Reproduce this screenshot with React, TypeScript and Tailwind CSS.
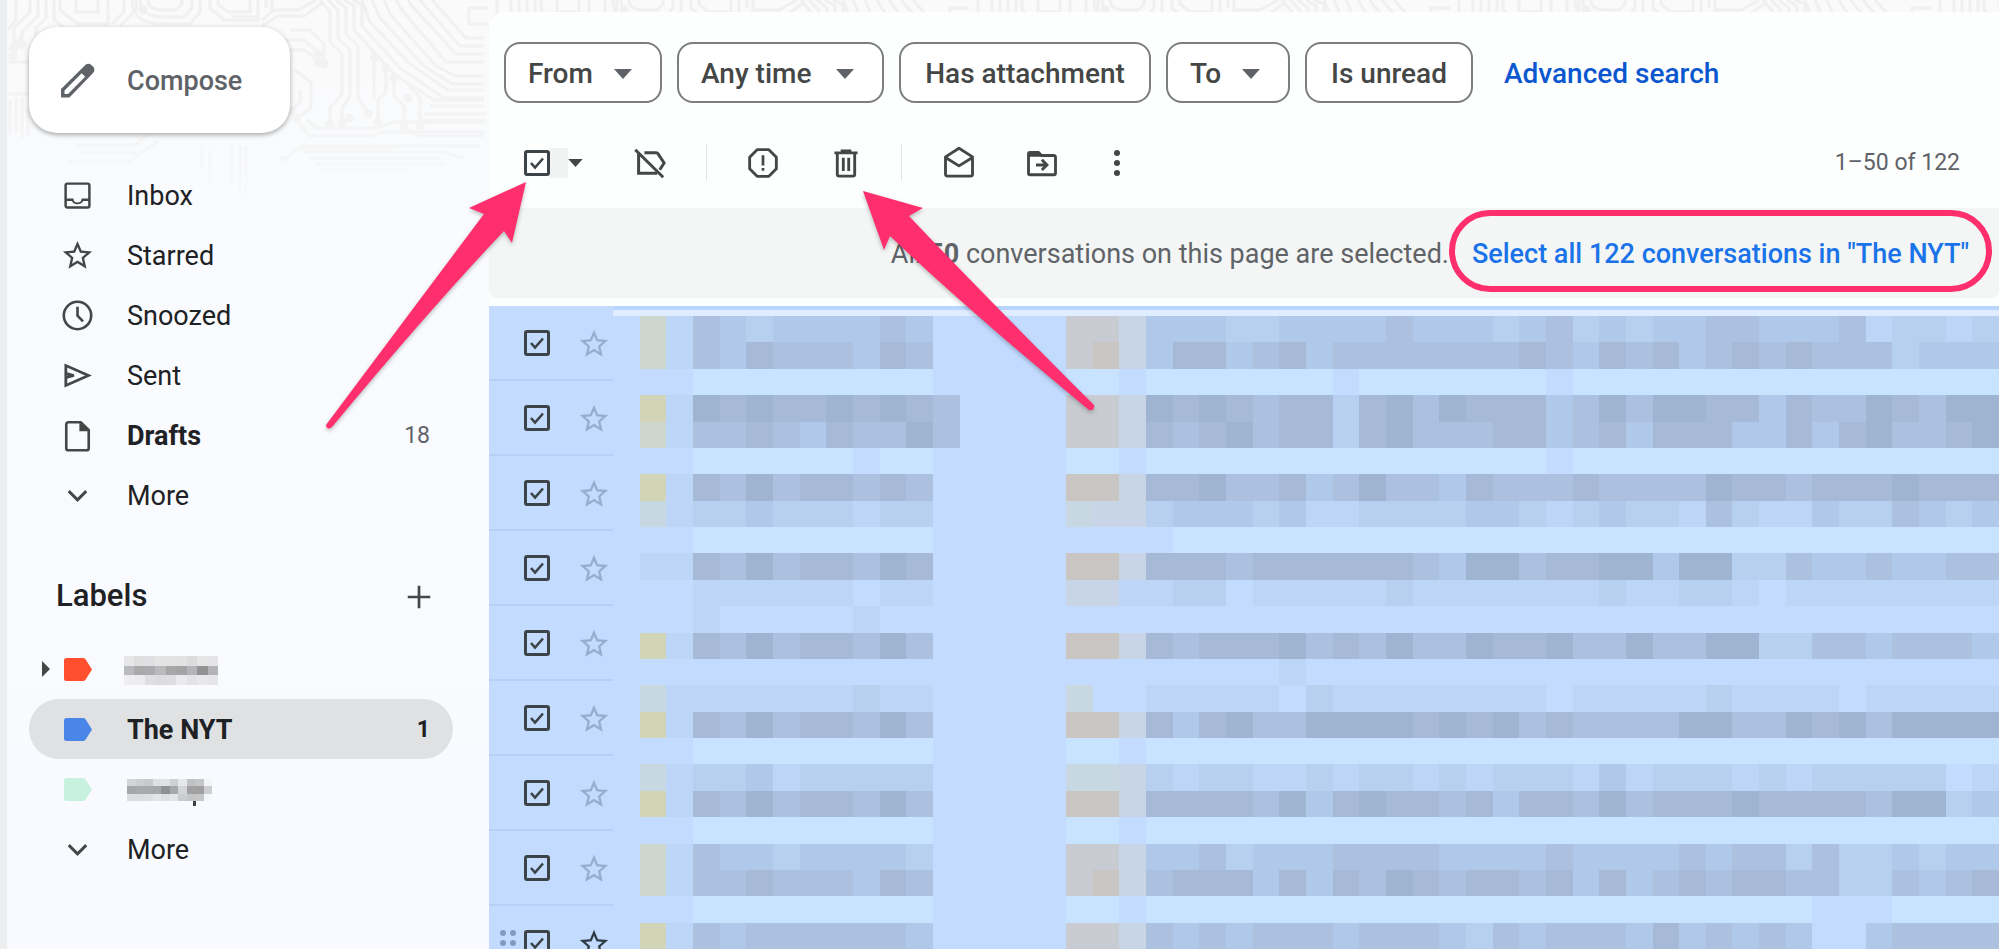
import React from "react";

type IconProps = { className?: string; children?: React.ReactNode };

function Icon({ className, children }: IconProps) {
  return (
    <svg viewBox="0 0 24 24" fill="currentColor" aria-hidden="true" className={`shrink-0 ${className ?? "size-9"}`}>
      {children}
    </svg>
  );
}

const STAR =
  "M22 9.24l-7.19-.62L12 2 9.19 8.63 2 9.24l5.46 4.73L5.82 21 12 17.27 18.18 21l-1.63-7.03L22 9.24zM12 15.4l-3.76 2.27 1-4.28-3.32-2.88 4.38-.38L12 6.1l1.71 4.04 4.38.38-3.32 2.88 1 4.28L12 15.4z";

const icons = {
  pencil: (
    <path
      fillRule="evenodd"
      d="M20.6 4.3l-1-.9a2.4 2.4 0 0 0-3.4 0L2.3 17.2V22h4.8L20.6 8a2.6 2.6 0 0 0 0-3.700zM6.300 20H4.300v-2L14.100 8.200l2 2z"
    />
  ),
  inbox: (
    <path d="M19 3H5a2 2 0 0 0-2 2v14c0 1.1.89 2 2 2h14a2 2 0 0 0 2-2V5a2 2 0 0 0-2-2zm.3 16.3H4.7v-3.6h3.4a4.5 4.5 0 0 0 7.8 0h3.400v3.600zm0-5.300h-4.500a2.800 2.800 0 0 1-5.600 0H4.700V4.700h14.600V14z" />
  ),
  star: <path d={STAR} />,
  clock: (
    <>
      <circle cx="12" cy="12" r="9.4" fill="none" stroke="currentColor" strokeWidth="1.8" />
      <path d="M12 6v6.2l3.8 3.8" fill="none" stroke="currentColor" strokeWidth="1.8" />
    </>
  ),
  send: (
    <path
      d="M4 5.2v13.600L19.500 12zM4 10.600l5.500 1.400L4 13.400"
      fill="none"
      stroke="currentColor"
      strokeWidth="1.9"
    />
  ),
  file: (
    <>
      <path
        d="M14.2 2.9H5.700c-.8 0-1.400.6-1.400 1.400v16.400c0 .8.6 1.400 1.400 1.400h12.600c.8 0 1.400-.6 1.400-1.400V8.300z"
        fill="none"
        stroke="currentColor"
        strokeWidth="1.8"
      />
      <path d="M13.300 2.600v6.400h6.600z" />
    </>
  ),
  chevron: <path d="M6 9l6 6 6-6" fill="none" stroke="currentColor" strokeWidth="2" />,
  plus: <path d="M12 4.500v15M4.500 12h15" fill="none" stroke="currentColor" strokeWidth="1.8" />,
  labelOff: (
    <path
      d="M2.200 3.200l18.600 18.300M4.400 5.500v13.300h12.400M8.300 5.200h7.800c.5 0 1 .2 1.300.7l4 6.100-2.900 4.500"
      fill="none"
      stroke="currentColor"
      strokeWidth="2"
    />
  ),
  spam: (
    <>
      <path
        d="M8.100 3.100h7.800l5 5v7.800l-5 5H8.100l-5-5V8.100z"
        fill="none"
        stroke="currentColor"
        strokeWidth="1.9"
        strokeLinejoin="round"
      />
      <path d="M11.100 6.800h1.800v6.800h-1.800zM11.100 15.400h1.800v1.800h-1.800z" />
    </>
  ),
  trash: (
    <path
      d="M4.300 5.200h15.400M9.400 4.500V3.900h5.200v.6M6.200 5.500v14c0 .7.500 1.200 1.200 1.200h9.200c.7 0 1.200-.5 1.200-1.200v-14M10.200 8.500v8.900M13.800 8.500v8.900"
      fill="none"
      stroke="currentColor"
      strokeWidth="1.9"
    />
  ),
  mail: (
    <path
      d="M3 7.900L12 2.200l9 5.700v11.600c0 .7-.5 1.200-1.200 1.200H4.200c-.7 0-1.200-.5-1.200-1.200zM3 8.300l9 5.600 9-5.600"
      fill="none"
      stroke="currentColor"
      strokeWidth="1.9"
      strokeLinejoin="round"
    />
  ),
  move: (
    <>
      <path
        d="M3 6.300v12.500c0 .6.400 1 1 1h16c.6 0 1-.4 1-1V8c0-.6-.4-1-1-1h-8.200L9.600 4.900H4c-.6 0-1 .4-1 1z"
        fill="none"
        stroke="currentColor"
        strokeWidth="1.9"
      />
      <path d="M3 4.500h6.800l2.500 3.300H3z" />
      <path d="M8 13.300h7M11.900 9.900l3.400 3.400-3.400 3.400" fill="none" stroke="currentColor" strokeWidth="1.900" />
    </>
  ),
  dots: (
    <>
      <circle cx="12" cy="5.300" r="2" />
      <circle cx="12" cy="12" r="2" />
      <circle cx="12" cy="18.700" r="2" />
    </>
  ),
};

function Caret({ className }: { className: string }) {
  return (
    <svg viewBox="0 0 18 10" fill="currentColor" aria-hidden="true" className={`shrink-0 ${className}`}>
      <path d="M0 0h18L9 10z" />
    </svg>
  );
}

function CheckBox({ label }: { label: string }) {
  return (
    <span className="grid size-[26px] shrink-0 place-items-center text-[#3c4448]">
      <input
        type="checkbox"
        defaultChecked
        aria-label={label}
        className="peer col-start-1 row-start-1 m-0 size-[26px] appearance-none rounded-[3px] border-[3px] border-current"
      />
      <svg
        viewBox="0 0 26 26"
        aria-hidden="true"
        className="pointer-events-none col-start-1 row-start-1 size-[26px] opacity-0 peer-checked:opacity-100"
      >
        <path d="M7 13l4 4.500L19 8.500" fill="none" stroke="currentColor" strokeWidth="2.600" />
      </svg>
    </span>
  );
}

const TRACES = [
  "M60 0v10l18 14h30V0", "M76 0v12h22V0", "M132 0c0 18 14 24 30 24h28l10-12V0", "M140 0c0 12 10 17 24 17h20l8-9V0",
  "M148 0c0 8 8 10 16 10h12l6-6V0", "M30 0v12l-16 16v18", "M38 0v16L22 32v10", "M46 0v18l-10 10v16", "M54 0v20l14 10",
  "M210 0v8l14 12h34V0", "M218 0v4l10 8h22V0", "M232 17h28", "M262 20l12-10h24l18-10", "M262 26l16-10h26l20-14",
  "M290 30h20l14 14v18", "M278 40h26l14 12", "M282 50h22l14 10", "M320 0l10 12v30l12 12v40l-12 14v14",
  "M328 0l10 10v28l12 12v46l-8 12v14", "M336 0l10 8v26l12 12v52l10 14", "M344 0l10 6v24l40 44 40 26h50",
  "M352 0l10 4v22l38 42 44 30h40", "M362 0l8 22 40 42 38 26h36", "M372 0l8 18 44 48 28 18h32", "M384 0l6 14 46 52 20 10h28",
  "M396 0l6 10 44 52h38", "M408 0l4 6 44 48h28", "M420 0l40 46h24", "M432 0l34 38h18", "M488 8h-19v16h19", "M295 70l16 12v26l-14 10",
  "M300 90v12l-8 8", "M386 70v22l-8 8v20", "M394 80v16l10 10v18", "M408 84l12 14v26", "M374 60v40", "M418 120h68M424 114h62M430 106h54",
  "M406 128l14 8h64", "M300 124l10 12h60l14-4h100", "M308 120l8 8h62l14-6h92", "M8 62h22v32H8", "M10 100v34M16 98v34M22 98v40M28 108v28",
  "M75 145h60l12-10M80 153h62l16-12M68 162h62l8-8", "M240 146v60M246 146v50M232 144v40M210 150v30M202 146v24",
  "M304 152h140l20 6M310 158h130M300 146h180", "M280 160c10 0 12-12 24-12h90", "M316 164h130M320 170h90", "M120 26l16-16V0M112 24l12-12V0",
  "M272 0v10M266 0v8M8 30l8-10V0M8 50l14-14",
];

const NODES = [
  [14, 48], [22, 44], [36, 46], [143, 10], [324, 64], [318, 54], [318, 62], [330, 124], [342, 122], [350, 118], [368, 114],
  [297, 119], [292, 111], [378, 122], [404, 126], [420, 126], [374, 58], [386, 68], [394, 78], [408, 98], [284, 160], [278, 40],
  [282, 50], [13, 56],
];

function Circuit() {
  return (
    <svg aria-hidden="true" className="pointer-events-none absolute inset-x-0 top-0 h-[230px] w-full">
      <defs>
        <linearGradient id="fade" x1="0" y1="0" x2="0" y2="1">
          <stop offset="0" stopColor="#fff" stopOpacity="1" />
          <stop offset="0.5" stopColor="#fff" stopOpacity="0.7" />
          <stop offset="0.9" stopColor="#fff" stopOpacity="0" />
        </linearGradient>
        <mask id="fadeMask">
          <rect width="100%" height="230" fill="url(#fade)" />
        </mask>
        <pattern id="circuit" width="481" height="230" patternUnits="userSpaceOnUse" x="7">
          <g fill="none" stroke="#f0f0f0" strokeWidth="3" transform="translate(-7 0)">
            {TRACES.map((d) => (
              <path key={d} d={d} />
            ))}
            {NODES.map(([x, y]) => (
              <circle key={`${x}-${y}`} cx={x} cy={y} r="3" fill="#f0f0f0" />
            ))}
          </g>
        </pattern>
      </defs>
      <rect width="100%" height="230" fill="url(#circuit)" mask="url(#fadeMask)" />
    </svg>
  );
}

type NavProps = { icon: React.ReactNode; label: string; count?: string; bold?: boolean };

function NavItem({ icon, label, count, bold }: NavProps) {
  return (
    <a href="#" className="flex h-[60px] items-center pr-[23px] pl-[31px] text-[27px] text-[#202124]">
      <Icon className="size-[35px] text-[#444746]">{icon}</Icon>
      <span className={bold ? "ml-8 flex-1 pt-[2px] font-bold" : "ml-8 flex-1 pt-[2px]"}>{label}</span>
      {count && <span className="pt-[2px] text-[23px] text-[#5f6368]">{count}</span>}
    </a>
  );
}

function Tag({ className }: { className: string }) {
  return (
    <svg viewBox="0 0 28 23" fill="currentColor" aria-hidden="true" className={`mx-1 h-[23px] w-7 shrink-0 ${className}`}>
      <path d="M2.500 0H19q1.500 0 2.500 1.200L28 11.500l-6.500 10.300Q20.500 23 19 23H2.500Q0 23 0 20.500v-18Q0 0 2.500 0z" />
    </svg>
  );
}

const BLUR_A = [
  ["#e6e6e8", "#dededf", "#e0e0e2", "#e4e4e5", "#e3e3e4", "#e2e2e3", "#dcdcde", "#e6e6e7", "#e4e4e6"],
  ["#b9babb", "#a9aaab", "#abacad", "#b9babb", "#a6a7a8", "#a3a4a5", "#b4b5b6", "#929394", "#b3b4b5"],
  ["#eeeef0", "#ececee", "#dfdfe1", "#dcdcde", "#dedee0", "#ebebed", "#e3e3e5", "#e8e8ea", "#e6e6e8"],
];
const BLUR_B = [
  ["#d3d4d5", "#cdcecf", "#c9cacb", "#dfe0e1", "#e0e1e2", "#cfd0d1", "#e6e7ea", "#c0c1c2", "#c6c7c8", "#f2f4f8"],
  ["#a6a7a8", "#a9aaab", "#a8a9aa", "#a6a7a8", "#8f9091", "#a7a8a9", "#d4d5d8", "#a0a1a0", "#9fa09f", "#cdced1"],
  ["#dcdddf", "#dcdddf", "#dddee0", "#e4e5e8", "#dfe0e2", "#e4e5e8", "#cbccce", "#c4c5c6", "#c6c7c8", "#f4f6fa"],
];

function Blurred({ rows, width, height, stem }: { rows: string[][]; width: number; height: number; stem?: boolean }) {
  return (
    <svg
      viewBox={`0 0 ${width} ${height + 6}`}
      width={width}
      height={height + 6}
      shapeRendering="crispEdges"
      role="img"
      aria-label="Hidden label"
    >
      {rows.map((row, r) =>
        row.map((c, i) => (
          <rect
            key={`${r}-${i}`}
            x={(i * width) / row.length}
            y={(r * height) / 3}
            width={width / row.length}
            height={height / 3}
            fill={c}
          />
        )),
      )}
      {stem && <rect x="66" y={height} width="3" height="5" fill="#3c4043" />}
    </svg>
  );
}

function Sidebar() {
  return (
    <aside className="relative flex w-[489px] shrink-0 flex-col pt-[27px] pl-[29px]">
      <button
        type="button"
        className="flex h-[106px] w-[261px] items-center rounded-[28px] bg-white pl-[28px] text-[27px] font-medium text-[#5f6368] shadow-[0_2px_4px_rgba(60,64,67,0.35),0_1px_6px_rgba(60,64,67,0.12)]"
      >
        <Icon className="size-[42px]">{icons.pencil}</Icon>
        <span className="ml-7 pt-[2px]">Compose</span>
      </button>
      <nav aria-label="Mailboxes" className="mt-8 mr-9">
        <NavItem icon={icons.inbox} label="Inbox" />
        <NavItem icon={icons.star} label="Starred" />
        <NavItem icon={icons.clock} label="Snoozed" />
        <NavItem icon={icons.send} label="Sent" />
        <NavItem icon={icons.file} label="Drafts" count="18" bold />
        <NavItem icon={icons.chevron} label="More" />
      </nav>
      <div className="mt-[44px] mr-9 flex h-[54px] items-center justify-between pr-4 pl-[27px] text-[#202124]">
        <h2 className="text-[31px] font-medium">Labels</h2>
        <button type="button" aria-label="Create new label" className="pt-[2px] text-[#444746]">
          <Icon className="size-9">{icons.plus}</Icon>
        </button>
      </div>
      <nav aria-label="Labels" className="mt-4 mr-9 text-[27px] text-[#202124]">
        <a href="#" className="flex h-[60px] items-center pl-[13px]">
          <svg viewBox="0 0 8 16" className="mr-[10px] h-4 w-2 text-[#444746]" fill="currentColor" aria-hidden="true">
            <path d="M0 0l8 8-8 8z" />
          </svg>
          <Tag className="text-[#ff4f2e]" />
          <span className="ml-7 pt-2">
            <Blurred rows={BLUR_A} width={94} height={29} />
          </span>
        </a>
        <a href="#" aria-current="page" className="flex h-[60px] items-center rounded-full bg-[#dfe1e2] pr-[23px] pl-[31px] font-bold">
          <Tag className="text-[#4a86e8]" />
          <span className="ml-[31px] flex-1 pt-[2px]">The NYT</span>
          <span className="pt-[2px] text-[23px]">1</span>
        </a>
        <a href="#" className="flex h-[60px] items-center pl-[31px]">
          <Tag className="text-[#c8f2df]" />
          <span className="ml-[31px] pt-2">
            <Blurred rows={BLUR_B} width={85} height={22} stem />
          </span>
        </a>
        <NavItem icon={icons.chevron} label="More" />
      </nav>
    </aside>
  );
}

const CHIPS = [
  { label: "From", menu: true, width: "w-[158px]" },
  { label: "Any time", menu: true, width: "w-[207px]" },
  { label: "Has attachment", menu: false, width: "w-[252px]" },
  { label: "To", menu: true, width: "w-[124px]" },
  { label: "Is unread", menu: false, width: "w-[168px]" },
];

function Filters() {
  return (
    <div className="flex items-center gap-[15px] pt-[42px] pl-[15px]">
      {CHIPS.map((c) => (
        <button
          key={c.label}
          type="button"
          className={`flex h-[61px] items-center rounded-2xl border-2 border-[#7b7e7d] bg-white pt-[2px] text-[28px] font-medium whitespace-nowrap text-[#444746] ${c.width} ${c.menu ? "justify-between pr-7 pl-[22px]" : "justify-center"}`}
        >
          {c.label}
          {c.menu && <Caret className="h-[10px] w-[18px] text-[#5f6368]" />}
        </button>
      ))}
      <a href="#" className="ml-4 pt-[2px] text-[28px] font-medium text-[#0b57d0]">
        Advanced search
      </a>
    </div>
  );
}

function Tool({ label, className, children }: { label: string; className?: string; children: React.ReactNode }) {
  return (
    <button type="button" aria-label={label} className={`shrink-0 ${className ?? ""}`}>
      <Icon className="size-9">{children}</Icon>
    </button>
  );
}

function Toolbar() {
  return (
    <div className="mt-[33px] flex h-[54px] items-center pr-[39px] pl-[35px] text-[#444746]">
      <div className="flex items-center">
        <CheckBox label="Select all" />
        <span className="h-[30px] w-[18px] bg-[#f1f2f2]" />
        <button type="button" aria-label="Selection options">
          <Caret className="h-2 w-[15px]" />
        </button>
      </div>
      <Tool label="Remove label" className="ml-[49px]">{icons.labelOff}</Tool>
      <span className="ml-[38px] h-9 w-px bg-[#e3e5e8]" />
      <Tool label="Report spam" className="ml-[38px]">{icons.spam}</Tool>
      <Tool label="Delete" className="ml-[47px]">{icons.trash}</Tool>
      <span className="ml-[37px] h-9 w-px bg-[#e3e5e8]" />
      <Tool label="Mark as read" className="ml-[39px]">{icons.mail}</Tool>
      <Tool label="Move to" className="ml-[47px]">{icons.move}</Tool>
      <Tool label="More options" className="ml-[39px]">{icons.dots}</Tool>
      <span className="ml-auto text-[23px] text-[#5f6368]">1–50 of 122</span>
    </div>
  );
}

function Banner() {
  return (
    <div className="mt-[18px] flex h-[90px] items-start justify-end rounded-b-lg bg-[#f3f6f5] pt-[2px] pr-[7px] text-[27px] whitespace-nowrap text-[#5f6368]">
      <p className="flex h-[82px] items-center pt-[6px]">
        <span>
          All <b>50</b> conversations on this page are selected.
        </span>
      </p>
      <a
        href="#"
        className="flex h-[82px] w-[543px] items-center justify-center rounded-[41px] border-[6px] border-[#ff2e6c] pt-[6px] font-medium text-[#1a73e8]"
      >
        Select all 122 conversations in "The NYT"
      </a>
    </div>
  );
}

/* Mosaic tones, from the row background to the darkest cell. */
const TONES: Record<string, string> = {
  ".": "#c2dbff",
  L: "#c8e3ff",
  "1": "#bdd6f7",
  "2": "#b7d0f0",
  "3": "#b0c8e9",
  "4": "#abc1df",
  "5": "#a6bad7",
  "6": "#9fb4d0",
  y: "#d2d4b8",
  z: "#cdd6cc",
  w: "#c8d8e2",
  p: "#c8ccd2",
  q: "#c9c5c2",
  r: "#c8d5e6",
};

const MOSAIC: [string, string, string, string][] = [
  [".z1", "432333343.", "ppr", "33322333343332342323344333412212"],
  [".z1", "435444354.", "pqr", "35534534444444543545345454442333"],
  ["...", "LLLLLLLLL.", "LL.", "LLLLLLL.LLLLLLL.LLLLLLLLLLLLLLLL"],
  [".y1", "6565565654", "ppr", "65654552564655534646655354465466"],
  [".z1", "4454354464", "ppr", "54564552564445534535553353564456"],
  ["...", "LLLLLL.LL.", "LL.", "LLLLLLLLLLLLLLL.LLLLLLLLLLLLLLLL"],
  [".y1", "546455454.", "qqr", "55644534644354445444465545556555"],
  [".w1", "223222122.", "wrr", "23332311222233212322142113224323"],
  ["...", "LLLLLLLLL.", "...", ".LLLLLLLLLLLLLLLLLLLLLLLLLLLLLLL"],
  [".11", "546455465.", "qqr", "55545555554366455663662243343344"],
  ["...", "111111.11.", "rr1", "122.1111121111111211221.11111111"],
  ["...", "1.....1...", "...", "................................"],
  [".y1", "546455464.", "qqr", "54555645464465564464466224434443"],
  ["...", "..........", "...", ".....1.........................."],
  [".w1", "111111211.", "w..", "11111.211111111.1111121111.11111"],
  [".y1", "546455464.", "qqr", "53564466665656454444664465646666"],
  ["...", "LLLLLLLLL.", "LL.", "LLLLLLLLLLLLLLLLLLLLLLLLLLLLLLLL"],
  [".w1", "223122222.", "wwr", "212211212212122213122212122222.1"],
  [".y1", "546455464.", "qqr", "55554635655453554645556555546623"],
  ["...", "LLLLLLLLL.", "LL.", "LLLLLLLLLLLLLLLLLLLLLLLLLLLLLLLL"],
  [".z1", "433233332.", "ppr", "33423334444333343333434424223233"],
  [".z1", "445444354.", "pqr", "45553535465455453534545544224345"],
  ["...", "LLLLLLLLL.", "LL.", "LLLLLLLLLLLLLLLLLLLLLLLLL...LLLL"],
  [".y1", "434444443.", "ppr", "4343444344432434443534343..34444"],
];

function Mosaic() {
  return (
    <svg
      viewBox="0 0 52 24"
      preserveAspectRatio="none"
      shapeRendering="crispEdges"
      role="img"
      aria-label="Hidden conversations"
      className="h-full w-full"
    >
      <rect width="52" height="24" fill="#c2dbff" />
      {MOSAIC.map(([lead, sender, tag, subject], r) =>
        (lead + sender + "...." + tag + subject)
          .split("")
          .map((t, i) => (t === "." ? null : <rect key={`${r}-${i}`} x={i} y={r} width="1" height="1" fill={TONES[t]} />)),
      )}
    </svg>
  );
}

function Conversations() {
  return (
    <div className="mt-2 flex min-h-0 flex-1 overflow-hidden bg-[#c2dbff]">
      <ul className="w-[124px] shrink-0">
        {Array.from({ length: 9 }, (_, i) => (
          <li key={i} className="flex h-[75px] items-center border-b-2 border-[#b6cff7] pl-[35px]">
            <div className="relative flex items-center">
              {i === 8 && (
                <svg viewBox="0 0 16 28" className="absolute right-full mr-2 h-7 w-4" fill="#8499c2" aria-hidden="true">
                  {[4, 14, 24].map((y) => (
                    <React.Fragment key={y}>
                      <circle cx="3" cy={y} r="3" />
                      <circle cx="13" cy={y} r="3" />
                    </React.Fragment>
                  ))}
                </svg>
              )}
              <CheckBox label={`Select conversation ${i + 1}`} />
            </div>
            <button
              type="button"
              aria-label="Star"
              className={i === 8 ? "ml-[27px] pt-[2px] text-[#2f3b45]" : "ml-[27px] pt-[2px] text-[#97adcd]"}
            >
              <Icon className="size-[34px]">{icons.star}</Icon>
            </button>
          </li>
        ))}
      </ul>
      <div className="flex min-w-0 flex-1 flex-col">
        <div className="h-1 shrink-0 bg-[#bad6ff]" />
        <div className="h-[6px] shrink-0 bg-[#e0ecff]" />
        <div className="min-h-0 flex-1">
          <Mosaic />
        </div>
      </div>
    </div>
  );
}

function Arrows() {
  return (
    <svg
      aria-hidden="true"
      width="1120"
      height="450"
      viewBox="0 0 1120 450"
      className="pointer-events-none absolute top-0 left-0 drop-shadow-[0_2px_2px_rgba(0,0,0,0.25)]"
      fill="#ff2e6c"
    >
      <path d="M526 182L469 208L484 214Q415 306 326 425Q327 431 332 427Q430 309 504 231L512 243Z" />
      <path d="M863 191L923 208L909 216Q975 286 1094 405Q1095 411 1089 410Q970 312 890 236L884 250Z" />
    </svg>
  );
}

export default function App() {
  return (
    <div className="relative flex h-screen overflow-hidden bg-linear-to-b from-[#fafafa] via-[#f9fbfe] via-25% to-[#f8faff] font-[Roboto,'Liberation_Sans',sans-serif]">
      <Circuit />
      <div className="absolute inset-y-0 left-0 w-[7px] bg-[#edeeef]" />
      <Sidebar />
      <main className="relative flex min-w-0 flex-1 flex-col">
        <div className="absolute inset-x-0 top-3 bottom-0 rounded-tl-2xl bg-[#fdfefe]" />
        <div className="relative flex min-h-0 flex-1 flex-col">
          <Filters />
          <Toolbar />
          <Banner />
          <Conversations />
        </div>
      </main>
      <Arrows />
    </div>
  );
}
